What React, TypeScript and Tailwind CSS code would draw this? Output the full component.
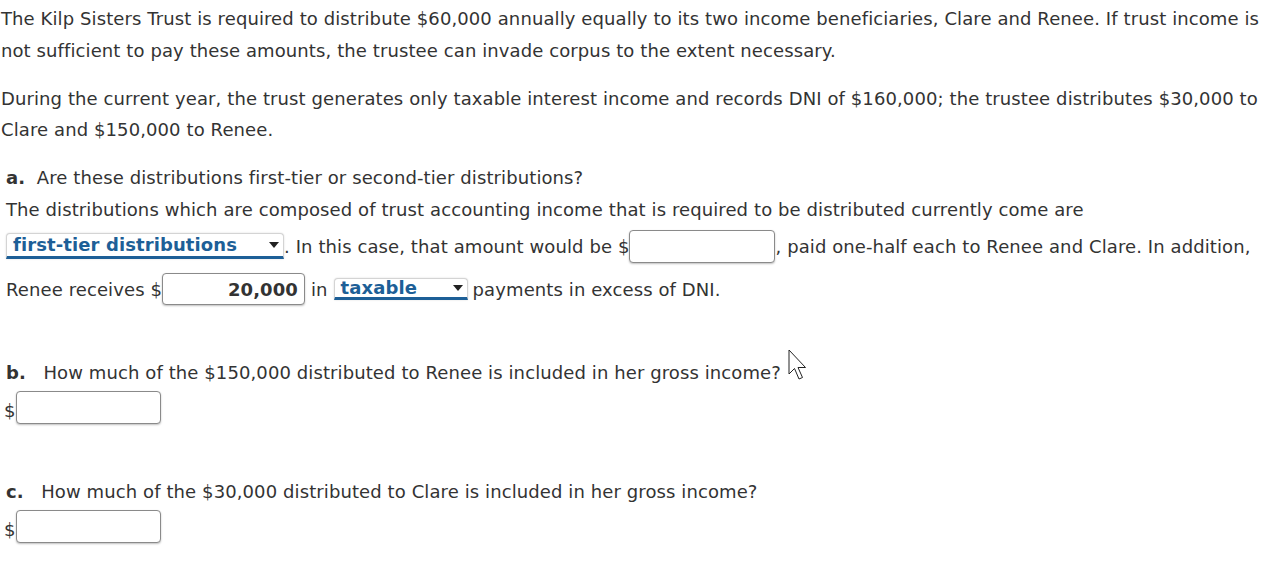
import React from "react";

const font = { fontFamily: 'Verdana, "DejaVu Sans", sans-serif' };

function Caret() {
  return (
    <svg width="10" height="6" viewBox="0 0 10 6" className="shrink-0">
      <path d="M0 0 L10 0 L5 6 Z" fill="#222" />
    </svg>
  );
}

function Select({ label, w, h }: { label: string; w: string; h: string }) {
  return (
    <span
      className={`inline-flex items-center justify-between ${w} ${h} bg-white rounded-t-[4px] border-x border-t border-[#d4d4d4] border-b-[3px] border-b-[#1d5f97] pl-[6px] pr-[4px] shadow-[0_0_2px_rgba(0,0,0,0.15)]`}
    >
      <span className="font-bold text-[#1d5f97] leading-none">{label}</span>
      <Caret />
    </span>
  );
}

function Input({ w, h, value }: { w: string; h: string; value?: string }) {
  return (
    <span
      className={`inline-flex items-center justify-end ${w} ${h} bg-white border border-[#8a8a8a] rounded-[4px] shadow-[0_1px_2px_rgba(0,0,0,0.25)] px-[6px] font-bold text-[#333]`}
    >
      {value}
    </span>
  );
}

export default function App() {
  return (
    <div className="relative w-[1275px] h-[568px] bg-white text-[#333] text-[18px] tracking-[0.1px] overflow-hidden" style={font}>
      <div className="pt-[3px] pl-[1px]">
        <p className="leading-[32px]">
          The Kilp Sisters Trust is required to distribute $60,000 annually equally to its two income beneficiaries, Clare and Renee. If trust income is
          <br />
          not sufficient to pay these amounts, the trustee can invade corpus to the extent necessary.
        </p>
        <p className="leading-[31px] mt-[16px]">
          During the current year, the trust generates only taxable interest income and records DNI of $160,000; the trustee distributes $30,000 to
          <br />
          Clare and $150,000 to Renee.
        </p>

        <div className="mt-[17px] pl-[5px]">
          <div className="leading-[32px]">
            <span className="font-bold">a.</span>&nbsp; Are these distributions first-tier or second-tier distributions?
          </div>
          <div className="leading-[32px]">
            The distributions which are composed of trust accounting income that is required to be distributed currently come are
          </div>
          <div className="flex items-center h-[38px] mt-[1px]">
            <Select label="first-tier distributions" w="w-[278px]" h="h-[26px]" />
            <span>. In this case, that amount would be $</span>
            <Input w="w-[146px]" h="h-[33px]" />
            <span>, paid one-half each to Renee and Clare. In addition,</span>
          </div>
          <div className="flex items-center h-[38px] mt-[5px]">
            <span>Renee receives $</span>
            <Input w="w-[143px]" h="h-[32px]" value="20,000" />
            <span className="px-[6px]">in</span>
            <Select label="taxable" w="w-[134px]" h="h-[22px]" />
            <span className="pl-[5px]">payments in excess of DNI.</span>
          </div>
        </div>

        <div className="mt-[49px] pl-[5px] leading-[32px]">
          <span className="font-bold">b.</span>&nbsp;&nbsp; How much of the $150,000 distributed to Renee is included in her gross income?
        </div>
        <div className="flex items-end pl-[3px] mt-[2px]">
          <span className="leading-none mb-[4px]">$</span>
          <Input w="w-[145px]" h="h-[33px]" />
        </div>

        <div className="mt-[52px] pl-[5px] leading-[32px]">
          <span className="font-bold">c.</span>&nbsp;&nbsp; How much of the $30,000 distributed to Clare is included in her gross income?
        </div>
        <div className="flex items-end pl-[3px] mt-[2px]">
          <span className="leading-none mb-[4px]">$</span>
          <Input w="w-[145px]" h="h-[33px]" />
        </div>
      </div>

      <svg className="absolute left-[788px] top-[349px]" width="20" height="32" viewBox="0 0 20 32">
        <path d="M1 1 L1 25 L6.5 19.5 L11 30 L14.5 28.5 L10 18.5 L17.5 18.5 Z" fill="white" stroke="#222" strokeWidth="1" strokeLinejoin="round" />
      </svg>
    </div>
  );
}
